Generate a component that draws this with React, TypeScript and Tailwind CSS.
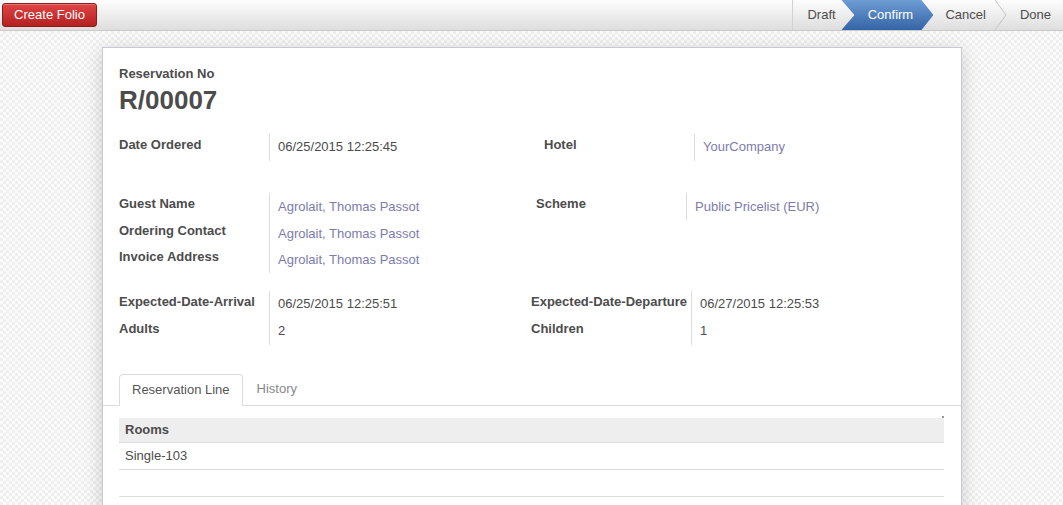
import React from "react"

const font = { fontFamily: '"Liberation Sans", Arial, sans-serif' }

type Row = { label: string; value: string; link?: boolean }

function Group({ rows, labelW, pl, rowH, valPt }: { rows: Row[]; labelW: string; pl: string; rowH: string; valPt: string }) {
  return (
    <div className={`flex items-start ${pl}`}>
      <div className={`${labelW} shrink-0`}>
        {rows.map((r) => (
          <div key={r.label} className={`${rowH} pt-[3px] text-[13px] leading-[16px] font-bold text-[#4c4c4c] whitespace-nowrap`}>
            {r.label}
          </div>
        ))}
      </div>
      <div className="border-l border-[#dcdcdc] pl-[8px]">
        {rows.map((r) => (
          <div
            key={r.label}
            className={`${rowH} ${valPt} text-[13px] leading-[16px] whitespace-nowrap ${r.link ? "text-[#7c7bad]" : "text-[#4c4c4c]"}`}
          >
            {r.value}
          </div>
        ))}
      </div>
    </div>
  )
}

export default function App() {
  return (
    <div style={font} className="h-[505px] w-[1063px] overflow-hidden flex flex-col bg-[#f6f6f6]">
      {/* top bar */}
      <div className="h-[31px] shrink-0 flex items-stretch justify-between bg-gradient-to-b from-[#fdfdfd] to-[#dedede] border-b border-[#c9c9c9]">
        <div className="pl-[2px] pt-[2px]">
          <button className="h-[24px] w-[95px] rounded-[3px] border border-[#8e1c1c] bg-gradient-to-b from-[#df4444] to-[#b42020] text-white text-[13px] leading-[22px] shadow-[inset_0_1px_0_rgba(255,255,255,0.25)]">
            Create Folio
          </button>
        </div>
        <div className="flex items-stretch text-[13px] text-[#4c4c4c]">
          <div className="w-[49px] border-l border-[#d2d2d2] pl-[14px] flex items-center">Draft</div>
          <div className="w-[92px] flex items-center justify-center pl-[6px] text-white bg-gradient-to-b from-[#6e9cd4] to-[#3565a6] [clip-path:polygon(0_0,80px_0,92px_50%,80px_100%,0_100%,13px_50%)]">
            Confirm
          </div>
          <div className="pl-[12px] pr-[9px] flex items-center">Cancel</div>
          <svg width="12" height="30" viewBox="0 0 12 30" className="self-center">
            <polyline points="0,0 11,15 0,30" fill="none" stroke="#c4c4c4" strokeWidth="1" />
          </svg>
          <div className="pl-[13px] pr-[12px] flex items-center">Done</div>
        </div>
      </div>

      {/* page */}
      <div className="flex-1 bg-[repeating-conic-gradient(#efefef_0_25%,#fbfbfb_0_50%)] bg-[length:6px_6px] pt-[16px] pl-[102px]">
        <div className="w-[860px] h-[600px] bg-white border border-[#c9c8d6] shadow-[0_4px_18px_rgba(0,0,0,0.18)] pt-[18px]">
          <div className="px-[16px]">
            <div className="text-[13px] leading-[16px] font-bold text-[#4c4c4c]">Reservation No</div>
            <div className="text-[26px] leading-[32px] font-bold text-[#4c4c4c] mt-[2px]">R/00007</div>

            <div className="flex items-start mt-[18px]">
              <div className="w-[412px]">
                <Group rows={[{ label: "Date Ordered", value: "06/25/2015 12:25:45" }]} labelW="w-[150px]" pl="" rowH="h-[27px]" valPt="pt-[5px]" />
              </div>
              <Group rows={[{ label: "Hotel", value: "YourCompany", link: true }]} labelW="w-[150px]" pl="pl-[13px]" rowH="h-[27px]" valPt="pt-[5px]" />
            </div>

            <div className="flex items-start mt-[32px]">
              <div className="w-[412px]">
                <Group
                  rows={[
                    { label: "Guest Name", value: "Agrolait, Thomas Passot", link: true },
                    { label: "Ordering Contact", value: "Agrolait, Thomas Passot", link: true },
                    { label: "Invoice Address", value: "Agrolait, Thomas Passot", link: true },
                  ]}
                  labelW="w-[150px]"
                  pl=""
                  rowH="h-[26.5px]"
                  valPt="pt-[6px]"
                />
              </div>
              <Group rows={[{ label: "Scheme", value: "Public Pricelist (EUR)", link: true }]} labelW="w-[150px]" pl="pl-[5px]" rowH="h-[27px]" valPt="pt-[6px]" />
            </div>

            <div className="flex items-start mt-[18px]">
              <div className="w-[412px]">
                <Group
                  rows={[
                    { label: "Expected-Date-Arrival", value: "06/25/2015 12:25:51" },
                    { label: "Adults", value: "2" },
                  ]}
                  labelW="w-[150px]"
                  pl=""
                  rowH="h-[27px]"
                  valPt="pt-[5px]"
                />
              </div>
              <Group
                rows={[
                  { label: "Expected-Date-Departure", value: "06/27/2015 12:25:53" },
                  { label: "Children", value: "1" },
                ]}
                labelW="w-[160px]"
                pl=""
                rowH="h-[27px]"
                valPt="pt-[5px]"
              />
            </div>
          </div>

          {/* tabs */}
          <div className="mt-[29px] flex border-b border-[#dddddd] pl-[16px] h-[32px]">
            <div className="px-[12px] border border-b-0 border-[#dddddd] rounded-t-[4px] bg-white text-[13px] text-[#555555] leading-[30px] mb-[-1px] h-[32px]">
              Reservation Line
            </div>
            <div className="px-[14px] text-[13px] text-[#888888] leading-[30px]">History</div>
          </div>

          <div className="pl-[16px] pr-[17px] pt-[12px]">
            <div className="relative">
              <div className="h-[25px] bg-[#eeeeee] border-b border-[#dddddd] px-[6px] text-[13px] font-bold text-[#4c4c4c] leading-[24px]">
                Rooms
              </div>
              <div className="absolute right-0 top-[-2px] w-[2px] h-[2px] bg-[#999999]" />
              <div className="h-[27px] border-b border-[#dddddd] px-[6px] text-[13px] text-[#4c4c4c] leading-[25px]">Single-103</div>
              <div className="h-[27px] border-b border-[#dddddd]" />
            </div>
          </div>
        </div>
      </div>
    </div>
  )
}
